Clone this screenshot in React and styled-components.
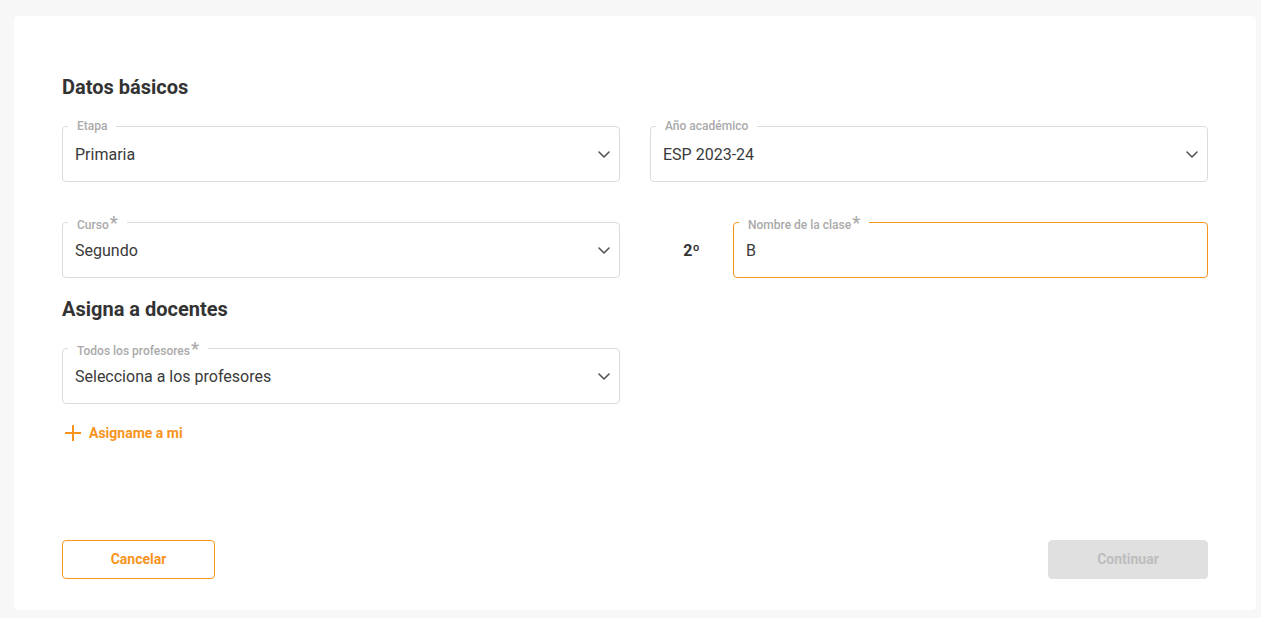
import React from 'react';
import styled, { createGlobalStyle } from 'styled-components';

const GlobalStyle = createGlobalStyle`
  body {
    margin: 0;
    background: #f7f7f7;
    font-family: Roboto, "Liberation Sans", sans-serif;
  }
`;

const orange = '#f7941d';

const Page = styled.div`
  padding: 16px 5px 8px 14px;
`;

const Card = styled.div`
  background: #fff;
  border-radius: 4px;
  padding: 59px 48px 31px 48px;
  height: 594px;
  box-sizing: border-box;
  display: flex;
  flex-direction: column;
`;

const Heading = styled.h2`
  margin: 0 0 ${({ $gap }) => $gap || 27}px;
  font-size: 20px;
  line-height: 24px;
  font-weight: 700;
  color: #333;
`;

const Row = styled.div`
  display: grid;
  grid-template-columns: 1fr 1fr;
  column-gap: 30px;
  margin-bottom: ${({ $gap }) => $gap || 0}px;
`;

const FieldBox = styled.div`
  position: relative;
  height: 56px;
  border: 1px solid ${({ $active }) => ($active ? orange : '#dcdcdc')};
  border-radius: 4px;
  box-sizing: border-box;
  display: flex;
  align-items: center;
  padding: 0 9px 0 12px;
  flex: 1;
`;

const Label = styled.span`
  position: absolute;
  top: ${({ $required }) => ($required ? -6 : -9)}px;
  left: 5px;
  padding: 0 9px;
  background: #fff;
  font-size: 12px;
  line-height: 16px;
  font-weight: 500;
  color: #aaa;
`;

const Star = styled.span`
  font-size: 18px;
  line-height: 0;
  margin-left: 1px;
`;

const Value = styled.span`
  flex: 1;
  font-size: 16px;
  color: #3a3a3a;
`;

const Chevron = () => (
  <svg width="12" height="7" viewBox="0 0 12 7" fill="none" stroke="#555" strokeWidth="1.6" strokeLinecap="round" strokeLinejoin="round">
    <path d="M1 1l5 5 5-5" />
  </svg>
);

const Field = ({ label, required, value, select, active }) => (
  <FieldBox $active={active}>
    <Label $required={required}>
      {label}
      {required && <Star>*</Star>}
    </Label>
    <Value>{value}</Value>
    {select && <Chevron />}
  </FieldBox>
);

const NameCell = styled.div`
  display: flex;
  align-items: center;
`;

const Prefix = styled.span`
  width: 83px;
  text-align: center;
  font-size: 16px;
  font-weight: 700;
  color: #333;
`;

const AddLink = styled.button`
  align-self: flex-start;
  margin-top: 21px;
  display: flex;
  align-items: center;
  gap: 8px;
  border: none;
  background: none;
  padding: 0 0 0 3px;
  font-family: inherit;
  font-size: 14px;
  font-weight: 700;
  color: ${orange};
  cursor: pointer;
`;

const Footer = styled.div`
  margin-top: auto;
  display: flex;
  justify-content: space-between;
`;

const Button = styled.button`
  height: 39px;
  width: ${({ $w }) => $w}px;
  border-radius: 4px;
  font-family: inherit;
  font-size: 14px;
  font-weight: 700;
  padding: 0 0 1px;
  border: 1px solid ${({ $disabled }) => ($disabled ? '#e0e0e0' : orange)};
  background: ${({ $disabled }) => ($disabled ? '#e0e0e0' : '#fff')};
  color: ${({ $disabled }) => ($disabled ? '#bdbdbd' : orange)};
`;

const App = () => (
  <Page>
    <GlobalStyle />
    <Card>
      <Heading>Datos básicos</Heading>
      <Row $gap={40}>
        <Field label="Etapa" value="Primaria" select />
        <Field label="Año académico" value="ESP 2023-24" select />
      </Row>
      <Row $gap={19}>
        <Field label="Curso" required value="Segundo" select />
        <NameCell>
          <Prefix>2º</Prefix>
          <Field label="Nombre de la clase" required value="B" active />
        </NameCell>
      </Row>
      <Heading>Asigna a docentes</Heading>
      <Row>
        <Field label="Todos los profesores" required value="Selecciona a los profesores" select />
      </Row>
      <AddLink>
        <svg width="16" height="16" viewBox="0 0 16 16" fill="none" stroke={orange} strokeWidth="2">
          <path d="M8 0v16M0 8h16" />
        </svg>
        Asigname a mi
      </AddLink>
      <Footer>
        <Button $w={153}>Cancelar</Button>
        <Button $w={160} $disabled>Continuar</Button>
      </Footer>
    </Card>
  </Page>
);

export default App;
